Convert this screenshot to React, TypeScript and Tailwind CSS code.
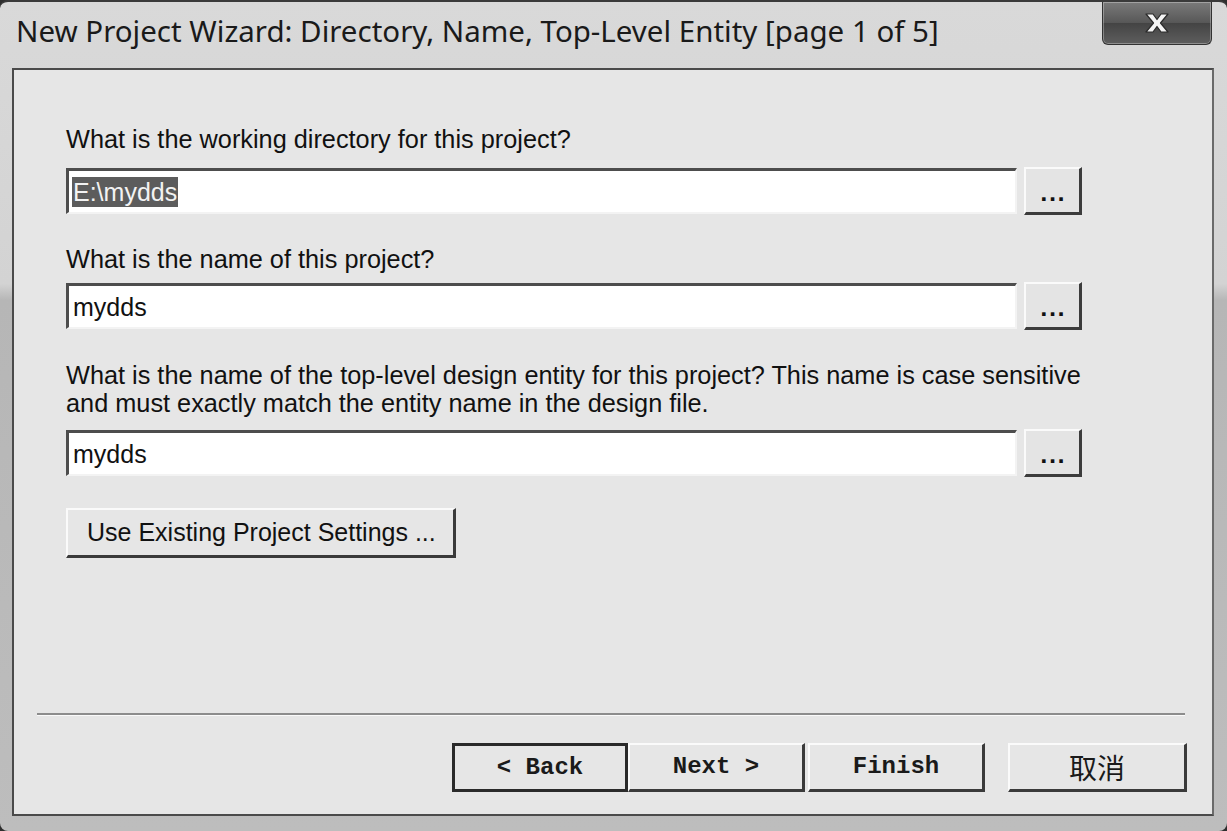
import React from 'react'

const sans = "font-['Liberation_Sans',Arial,sans-serif]"

function Browse() {
  return (
    <button className="w-[58px] h-[48px] shrink-0 bg-[#e4e4e4] border-t-2 border-l-2 border-r-[3px] border-b-[3px] border-t-[#fafafa] border-l-[#fafafa] border-r-[#3c3c3c] border-b-[#3c3c3c] flex items-end justify-center pb-[8px]">
      <span className="font-['DejaVu_Sans',sans-serif] font-bold text-[20px] leading-none tracking-[1px] text-[#111] pl-[1px]">...</span>
    </button>
  )
}

function Field({ value, selected }: { value: string; selected?: boolean }) {
  return (
    <div className="flex items-center gap-[7px]">
      <div className="w-[951px] h-[46px] bg-white border-t-[3px] border-l-[3px] border-r-2 border-b-2 border-t-[#4d4d4d] border-l-[#4d4d4d] border-r-[#f3f3f3] border-b-[#f3f3f3] flex items-center pl-[3px]">
        <span
          className={
            sans +
            ' text-[25px] leading-[30px] px-[1px] ' +
            (selected ? 'bg-[#5c5c5c] text-[#f2f2f2]' : 'text-[#111]')
          }
        >
          {value}
        </span>
      </div>
      <Browse />
    </div>
  )
}

function NavButton({ label, focused, cjk, className }: { label: string; focused?: boolean; cjk?: boolean; className?: string }) {
  const border = focused
    ? 'border-[3px] border-[#2a2a2a]'
    : 'border-t-2 border-l-2 border-r-[3px] border-b-[3px] border-t-[#fafafa] border-l-[#fafafa] border-r-[#3a3a3a] border-b-[#3a3a3a]'
  const font = cjk
    ? "font-['Noto_Sans_CJK_SC',sans-serif] text-[28px]"
    : "font-['Liberation_Mono','Courier_New',monospace] font-bold text-[24px]"
  return (
    <button className={'h-[49px] bg-[#e6e6e6] flex items-center justify-center text-[#1a1a1a] ' + border + ' ' + font + ' ' + (className || '')}>
      {label}
    </button>
  )
}

export default function App() {
  return (
    <div className="w-[1227px] h-[831px] bg-[#2e2e2e] overflow-hidden">
      <div className="w-full h-full rounded-[8px] border-t-2 border-t-[#3a3a3a] bg-[linear-gradient(to_bottom,#d9d9d9_0%,#d3d3d3_34%,#b6b6b6_36%,#bdbdbd_100%)] flex flex-col pl-[12px] pr-[13px] pb-[15px]">
        {/* title bar */}
        <div className="h-[66px] shrink-0 flex items-start justify-between">
          <span className="mt-[13px] pl-[4px] font-['Noto_Sans',sans-serif] text-[29.5px] leading-[32px] text-[#1a1a1a] whitespace-nowrap">
            New Project Wizard: Directory, Name, Top-Level Entity [page 1 of 5]
          </span>
          <div className="mr-[2px] w-[110px] h-[43px] shrink-0 rounded-b-[6px] border border-t-0 border-[#333] bg-[linear-gradient(to_bottom,#7a7a7a_0%,#575757_50%,#444_51%,#5e5e5e_100%)] flex items-center justify-center shadow-[inset_0_0_0_1px_rgba(255,255,255,0.3)]">
            <svg width="30" height="22" viewBox="0 0 30 22">
              <path
                d="M4 2h7l4 5.5L19 2h7l-7.5 9L26 20h-7l-4-5.5L11 20H4l7.5-9z"
                fill="#f4f4f4"
                stroke="#2a2a2a"
                strokeWidth="1.2"
                strokeLinejoin="round"
              />
            </svg>
          </div>
        </div>

        {/* client area */}
        <div className="flex-1 border-2 border-t-[#4a4a4a] border-l-[#4a4a4a] border-r-[#6a6a6a] border-b-[#4a4a4a] bg-[#e6e6e6] flex flex-col">
          <div className={'pl-[52px] flex flex-col text-[#111] ' + sans}>
            <p className="mt-[55px] text-[25.3px] leading-[28px]">What is the working directory for this project?</p>
            <div className="mt-[14px]">
              <Field value="E:\mydds" selected />
            </div>

            <p className="mt-[30px] text-[25.3px] leading-[28px]">What is the name of this project?</p>
            <div className="mt-[9px]">
              <Field value="mydds" />
            </div>

            <p className="mt-[31px] text-[25.3px] leading-[28px]">
              What is the name of the top-level design entity for this project? This name is case sensitive
              <br />
              and must exactly match the entity name in the design file.
            </p>
            <div className="mt-[12px]">
              <Field value="mydds" />
            </div>

            <div className="mt-[31px]">
              <button className="w-[390px] h-[50px] bg-[#e6e6e6] border-t-2 border-l-2 border-r-[3px] border-b-[3px] border-t-[#fafafa] border-l-[#fafafa] border-r-[#3a3a3a] border-b-[#3a3a3a] text-[25px] text-[#111] flex items-center pl-[19px]">
                Use Existing Project Settings ...
              </button>
            </div>
          </div>

          {/* separator */}
          <div className="mt-[155px] ml-[23px] mr-[27px] h-[3px] border-t-2 border-t-[#8c8c8c] border-b border-b-[#fafafa]" />

          {/* nav buttons */}
          <div className="mt-[27px] flex justify-end pr-[25px]">
            <NavButton label="< Back" focused className="w-[176px]" />
            <NavButton label="Next >" className="w-[177px]" />
            <NavButton label="Finish" className="w-[177px] ml-[3px]" />
            <NavButton label="取消" cjk className="w-[179px] ml-[23px]" />
          </div>
        </div>
      </div>
    </div>
  )
}
